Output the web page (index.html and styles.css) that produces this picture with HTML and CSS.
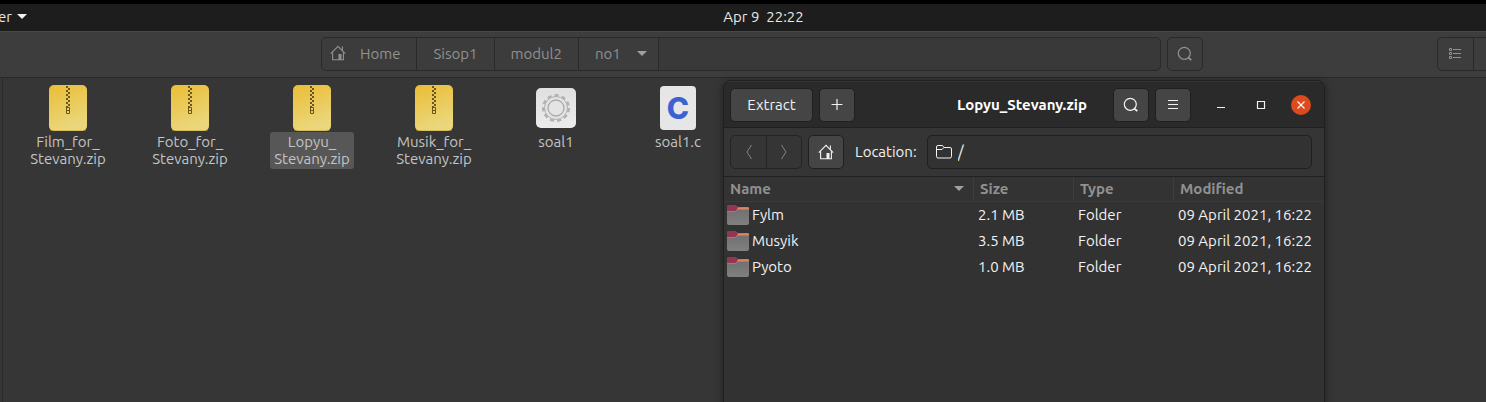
FILE: index.html
```html
<!DOCTYPE html>
<html lang="en">
<head>
<meta charset="utf-8">
<title>Files</title>
<link rel="stylesheet" href="styles.css">
</head>
<body>
<svg class="defs" aria-hidden="true">
  <defs>
    <linearGradient id="gold" x1="0" y1="0" x2=".3" y2="1"><stop offset="0" stop-color="#eabd36"/><stop offset="1" stop-color="#ead77c"/></linearGradient>
    <linearGradient id="paper" x1="0" y1="0" x2="0" y2="1"><stop offset="0" stop-color="#e0e0e0"/><stop offset="1" stop-color="#ececec"/></linearGradient>
    <linearGradient id="grey" x1="0" y1="0" x2="0" y2="1"><stop offset="0" stop-color="#707070"/><stop offset="1" stop-color="#808080"/></linearGradient>
    <linearGradient id="tab" x1="0" y1="0" x2="1" y2="0"><stop offset="0" stop-color="#963a52"/><stop offset="1" stop-color="#d9805c"/></linearGradient>
    <pattern id="teeth" width="4" height="4" patternUnits="userSpaceOnUse"><path fill="#6b5520" d="M0 0h2v2h-2zM2 2h2v2h-2z"/></pattern>
  </defs>
  <symbol id="zip" viewBox="0 0 38 46">
    <rect width="38" height="46" rx="5" fill="url(#gold)"/>
    <rect x="1" y="45" width="36" height="1" rx="1" fill="#c8a43c" opacity=".5"/>
    <g transform="translate(17 1)"><rect width="4" height="22" fill="url(#teeth)"/></g>
    <path d="M17.5 22.5h3v6h-3zM17.5 25.5h3" fill="none" stroke="#6b5520"/>
  </symbol>
  <symbol id="gear" viewBox="0 0 40 40">
    <rect width="40" height="40" rx="5" fill="url(#paper)"/>
    <circle cx="20" cy="20" r="12.5" fill="none" stroke="#b2b2b2" stroke-width="3" stroke-dasharray="4.1 3.04"/>
    <circle cx="20" cy="20" r="11.5" fill="#e4e4e4" stroke="#b0b0b0"/>
    <circle cx="20" cy="20" r="8" fill="none" stroke="#aaa" stroke-width="1.3"/>
  </symbol>
  <symbol id="home" viewBox="0 0 16 16">
    <path d="M.8 8.7 8 1.3l7.2 7.4M2.6 7.5v7.2h10.8V7.5M12.4 5.5v-4" fill="none" stroke="currentColor" stroke-width="1.1"/>
    <path d="M8.5 9h3v6h-3z" fill="currentColor"/>
  </symbol>
  <symbol id="search" viewBox="0 0 16 16">
    <circle cx="7.3" cy="7.3" r="6" fill="none" stroke="currentColor" stroke-width="1.2"/>
    <path d="m11.3 11.6 3 2.4" fill="none" stroke="currentColor" stroke-width="1.8"/>
  </symbol>
  <symbol id="folder" viewBox="0 0 22 20">
    <path d="M0 2q0-2 2-2h6l3 2h9q2 0 2 2v6H0z" fill="url(#tab)"/>
    <path d="M0 2q0-2 2-2h6l3 2-2 4H0z" fill="#953650"/>
    <path d="M11 2.500h11v2H10z" fill="#dd8360"/>
    <path d="M0 6.500h8l3-2.500h11v14q0 2-2 2H2q-2 0-2-2z" fill="url(#grey)"/>
    <path d="M0 6.500h8l3-2h11" fill="none" stroke="#c87985" stroke-width=".7"/>
  </symbol>
</svg>

<header class="panel">
  <button class="app-menu">er <span class="caret light"></span></button>
  <time class="clock">Apr 9&nbsp; 22:22</time>
</header>

<main class="files">
  <div class="toolbar">
    <nav class="path" aria-label="Path">
      <button class="crumb"><svg class="icon"><use href="#home"/></svg>Home</button>
      <button class="crumb">Sisop1</button>
      <button class="crumb">modul2</button>
      <button class="crumb last">no1 <span class="caret"></span></button>
    </nav>
    <button class="tool" aria-label="Search"><svg class="icon"><use href="#search"/></svg></button>
    <div class="views">
      <button class="view" aria-label="List view"><svg class="icon" viewBox="0 0 16 16"><path d="M1.500 2.500h2v2h-2zM1.500 6.500h2v2h-2zM1.500 10.500h2v2h-2zM5 3.500h8M5 7.500h8M5 11.500h8" fill="none" stroke="currentColor"/></svg></button>
      <button class="view" aria-label="View options"><svg class="icon" viewBox="0 0 16 16"><path d="M3 5.500h10L8 10z" fill="currentColor"/></svg></button>
    </div>
  </div>
  <ul class="grid">
    <li class="file"><span class="thumb"><svg class="zip"><use href="#zip"/></svg></span><span class="label">Film_for_<br>Stevany.zip</span></li>
    <li class="file"><span class="thumb"><svg class="zip"><use href="#zip"/></svg></span><span class="label">Foto_for_<br>Stevany.zip</span></li>
    <li class="file"><span class="thumb"><svg class="zip"><use href="#zip"/></svg></span><span class="label selected">Lopyu_<br>Stevany.zip</span></li>
    <li class="file"><span class="thumb"><svg class="zip"><use href="#zip"/></svg></span><span class="label">Musik_for_<br>Stevany.zip</span></li>
    <li class="file"><span class="thumb"><svg class="exec"><use href="#gear"/></svg></span><span class="label">soal1</span></li>
    <li class="file"><span class="thumb"><span class="source">C</span></span><span class="label">soal1.c</span></li>
  </ul>
</main>

<section class="window" aria-label="Lopyu_Stevany.zip">
  <header class="titlebar">
    <div class="side">
      <button class="btn extract">Extract</button>
      <button class="btn" aria-label="Add files"><svg class="icon" viewBox="0 0 16 16"><path d="M2.500 7.500h11M8 2v11" stroke="currentColor" stroke-width="1.200"/></svg></button>
    </div>
    <h1 class="title">Lopyu_Stevany.zip</h1>
    <div class="side end">
      <button class="btn" aria-label="Search"><svg class="icon"><use href="#search"/></svg></button>
      <button class="btn" aria-label="Menu"><svg class="icon" viewBox="0 0 16 16"><path d="M3 3.500h10M3 7.500h10M3 11.500h10" stroke="currentColor" stroke-width="1.200"/></svg></button>
      <div class="controls">
        <button class="control" aria-label="Minimize"><svg class="icon" viewBox="0 0 16 16"><path d="M4 10.500h8" stroke="currentColor"/></svg></button>
        <button class="control" aria-label="Maximize"><svg class="icon" viewBox="0 0 16 16"><path d="M4.500 4.500h7v7h-7z" fill="none" stroke="currentColor" stroke-width="1.200"/></svg></button>
        <button class="control close" aria-label="Close"><svg class="icon" viewBox="0 0 16 16"><path d="m4.500 4.500 7 7m0-7-7 7" stroke="currentColor" stroke-width="1.300"/></svg></button>
      </div>
    </div>
  </header>
  <div class="location">
    <div class="nav">
      <button class="step" aria-label="Back"><svg class="icon" viewBox="0 0 16 16"><path d="M10.500 1 6 8l4.500 7" fill="none" stroke="currentColor"/></svg></button>
      <button class="step" aria-label="Forward"><svg class="icon" viewBox="0 0 16 16"><path d="M5.500 1 10 8l-4.500 7" fill="none" stroke="currentColor"/></svg></button>
    </div>
    <button class="btn" aria-label="Home"><svg class="icon"><use href="#home"/></svg></button>
    <label class="loc-label" for="loc">Location:</label>
    <div class="entry">
      <svg class="icon" viewBox="0 0 16 16"><path d="M.5 3q0-1.500 1.500-1.500h4.500l1.500 2h6q1.500 0 1.500 1.500v7.500q0 1.500-1.500 1.500H2Q.5 14 .5 12.500zM.5 5.500H6l2-2" fill="none" stroke="currentColor"/></svg>
      <input id="loc" class="loc-input" type="text" value="/">
    </div>
  </div>
  <table class="list">
    <colgroup><col><col class="narrow"><col class="narrow"><col class="wide"></colgroup>
    <thead>
      <tr><th><span class="sort">Name <span class="caret"></span></span></th><th>Size</th><th>Type</th><th>Modified</th></tr>
    </thead>
    <tbody>
      <tr><td><span class="name"><svg class="folder"><use href="#folder"/></svg><span class="text">Fylm</span></span></td><td>2.1 MB</td><td>Folder</td><td>09 April 2021, 16:22</td></tr>
      <tr><td><span class="name"><svg class="folder"><use href="#folder"/></svg><span class="text">Musyik</span></span></td><td>3.5 MB</td><td>Folder</td><td>09 April 2021, 16:22</td></tr>
      <tr><td><span class="name"><svg class="folder"><use href="#folder"/></svg><span class="text">Pyoto</span></span></td><td>1.0 MB</td><td>Folder</td><td>09 April 2021, 16:22</td></tr>
    </tbody>
  </table>
</section>
</body>
</html>
```
FILE: styles.css
```css
* { box-sizing: border-box; }
body {
  margin: 0;
  min-height: 100vh;
  display: flex;
  flex-direction: column;
  position: relative;
  overflow: hidden;
  background: #363636;
  color: #f2f2f2;
  font: 15px/17px Ubuntu, "Noto Sans", sans-serif;
}
button, input { font: inherit; color: inherit; margin: 0; padding: 0; border: 0; background: none; }
button { display: flex; align-items: center; justify-content: center; }
.defs { position: absolute; width: 0; height: 0; }
.icon { width: 16px; height: 16px; flex: none; }
.caret {
  border: 5px solid transparent;
  border-top-color: #a0a0a0;
  border-bottom: 0;
}

/* Top panel */
.panel {
  display: flex;
  align-items: center;
  height: 31px;
  padding-bottom: 2px;
  border-top: 4px solid #000;
  background: #1d1d1d;
  color: #e8e8e8;
}
.app-menu { width: 43px; justify-content: flex-start; gap: 5px; margin-left: -2px; }
.caret.light { border-top-color: #f2f2f2; }
.clock { flex: 1; text-align: center; }

/* File manager */
.files { flex: 1; display: flex; flex-direction: column; }
.toolbar {
  display: flex;
  gap: 6px;
  padding: 5px 0 6px 321px;
  background: #3d3d3d;
  border-top: 1px solid #484848;
  border-bottom: 1px solid #292929;
  color: #919191;
}
.path, .tool, .views { border: 1px solid #292929; border-radius: 5px; height: 34px; }
.path { display: flex; flex: 1; background: #393939; }
.crumb { padding: 0 16px 2px; border-right: 1px solid #292929; background: #3c3c3c; }
.crumb:first-child { padding: 0 16px 2px 8px; gap: 14px; border-radius: 4px 0 0 4px; }
.crumb.last { padding: 0 11px 2px 16px; gap: 16px; }
.tool { width: 36px; }
.views { display: flex; width: 72px; margin: 0 -23px 0 228px; }
.view { width: 35px; }
.view + .view { border-left: 1px solid #292929; }
.grid {
  flex: 1;
  display: grid;
  grid-template-columns: repeat(6, minmax(0, 122px));
  align-content: start;
  margin: 0 0 0 2px;
  padding: 7px 4px;
  border-left: 1px solid #2b2b2b;
  list-style: none;
}
.file { display: flex; flex-direction: column; align-items: center; color: #c4c4c4; }
.thumb { display: flex; align-items: center; height: 46px; }
.zip { width: 38px; height: 46px; }
.exec { width: 40px; height: 40px; }
.source {
  width: 36px;
  height: 44px;
  border-radius: 4px;
  background: #e6e6e6;
  color: #3c61d3;
  font: 800 30px/44px Inter, sans-serif;
  text-align: center;
}
.label { padding: 1px 4px 2px; margin-top: 1px; border-radius: 3px; text-align: center; }
.label.selected { background: #575757; }

/* Archive window */
.window {
  position: absolute;
  top: 80px;
  left: 723px;
  right: 161px;
  bottom: -10px;
  border: 1px solid #202020;
  border-radius: 8px 8px 0 0;
  background: #323232;
  box-shadow: 0 2px 10px rgba(0, 0, 0, .4);
  overflow: hidden;
}
.titlebar {
  display: flex;
  align-items: center;
  justify-content: space-between;
  height: 47px;
  padding: 0 6px;
  background: #2a2a2a;
  border-top: 1px solid #353535;
  border-bottom: 1px solid #202020;
}
.side { display: flex; flex: 1; gap: 6px; }
.end { justify-content: flex-end; }
.title { margin: 0 4px 0 0; font-size: 15px; font-weight: bold; color: #fff; }
.btn {
  width: 36px;
  height: 34px;
  border: 1px solid #202020;
  border-radius: 5px;
  background: #454545;
}
.extract { width: 83px; }
.controls { display: flex; align-items: center; gap: 20px; margin: 0 7px 0 14px; }
.control { width: 20px; height: 20px; border-radius: 50%; }
.close { background: #dd4a1c; }
.location {
  display: flex;
  align-items: center;
  height: 49px;
  padding: 0 12px 0 6px;
  background: #353535;
  border-bottom: 1px solid #202020;
}
.nav { display: flex; margin-right: 6px; border: 1px solid #242424; border-radius: 5px; color: #858585; }
.step { width: 35px; height: 32px; }
.step + .step { border-left: 1px solid #242424; }
.loc-label { margin: 0 10px 0 11px; padding-bottom: 2px; }
.entry {
  display: flex;
  flex: 1;
  align-items: center;
  gap: 6px;
  height: 34px;
  padding: 0 8px;
  border: 1px solid #202020;
  border-radius: 5px;
  background: #323232;
}
.loc-input { flex: 1; min-width: 0; outline: 0; font-size: 16px; }
.list { width: 100%; border-collapse: separate; border-spacing: 0; table-layout: fixed; }
.narrow { width: 100px; }
.wide { width: 151px; }
.list th {
  height: 25px;
  padding: 0 6px 2px;
  background: #333;
  border-bottom: 1px solid #3b3b3b;
  color: #919191;
  text-align: left;
}
.list th + th { border-left: 1px solid #3d3d3d; }
.list td { height: 26px; padding: 0 5px 2px; white-space: nowrap; }
.list td:first-child { padding: 0 0 0 3px; }
.sort { display: flex; align-items: center; justify-content: space-between; padding-right: 3px; }
.name { display: flex; align-items: center; gap: 3px; }
.text { padding-bottom: 2px; }
.folder { width: 22px; height: 20px; }
```
